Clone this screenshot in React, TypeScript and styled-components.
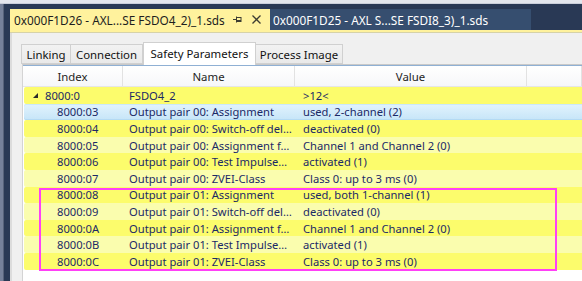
import React from "react";
import styled, { createGlobalStyle, css } from "styled-components";

const GlobalStyle = createGlobalStyle`
  html, body { margin: 0; padding: 0; background: #ffffff; overflow: hidden; }
  * { box-sizing: border-box; }
`;

const FONT = `"Noto Sans", "Open Sans", Arial, sans-serif`;

const Frame = styled.div`
  position: relative;
  width: 582px;
  height: 281px;
  overflow: hidden;
  display: flex;
  flex-direction: column;
  font-family: ${FONT};
  font-size: 11.2px;
`;

const TopStrip = styled.div`
  height: 4px;
  flex: none;
  background: #e3e6ed;
  border-bottom: 1px solid #c9ceda;
`;

const Body = styled.div`
  flex: 1;
  display: flex;
  min-height: 0;
`;

const LeftEdge = styled.div`
  width: 4px;
  flex: none;
  background: #75819a;
  border-right: 1px solid #56627a;
`;

const DocWell = styled.div`
  flex: 1;
  min-width: 0;
  display: flex;
  flex-direction: column;
  background: #293955;
  padding: 5px 0 0 6px;
`;

const TabStrip = styled.div`
  display: flex;
  height: 21px;
  flex: none;
`;

const DocTab = styled.div<{ $active?: boolean }>`
  display: flex;
  align-items: center;
  padding: 0 0 0 4px;
  white-space: nowrap;
  ${(p) =>
    p.$active
      ? css`
          width: 260px;
          background: #fff29d;
          color: #1e1e1e;
        `
      : css`
          width: 261px;
          background: #364e6f;
          color: #ffffff;
          padding-left: 3px;
        `}
`;

const TabTitle = styled.span`
  flex: 1;
  font-size: 11.8px;
`;

const TabIcons = styled.span`
  display: flex;
  align-items: center;
  gap: 10px;
  margin-right: 9px;
`;

const AccentLine = styled.div`
  height: 3px;
  flex: none;
  background: #fff29d;
  border-bottom: 1px solid #d6d2a8;
`;

const Panel = styled.div`
  flex: 1;
  display: flex;
  flex-direction: column;
  background: #f0f0f0;
  border-left: 2px solid #dcdcdc;
  padding: 8px 0 0 9px;
  min-height: 0;
`;

const InnerTabs = styled.div`
  display: flex;
  align-items: flex-end;
  height: 23px;
  flex: none;
  position: relative;
  z-index: 1;
`;

const InnerTab = styled.div<{ $active?: boolean; $w: number }>`
  width: ${(p) => p.$w}px;
  display: flex;
  align-items: center;
  justify-content: center;
  border: 1px solid #d0d0d0;
  color: #111;
  font-size: 11.4px;
  ${(p) =>
    p.$active
      ? css`
          height: 23px;
          background: #ffffff;
          border-bottom: none;
          margin-bottom: -1px;
          padding-bottom: 2px;
        `
      : css`
          height: 20px;
          background: linear-gradient(#f2f2f2, #e9e9e9);
          margin-left: -1px;
          &:first-child { margin-left: 0; }
        `}
`;

const ListBox = styled.div`
  flex: 1;
  display: flex;
  flex-direction: column;
  background: #ffffff;
  border-top: 1px solid #c9c9c9;
  border-left: 1px solid #d4d4d4;
  margin-left: 1px;
  min-height: 0;
`;

const ListInner = styled.div`
  flex: 1;
  border-top: 1px solid #8fb0d4;
  background: #ffffff;
`;

const HeaderRow = styled.div`
  display: grid;
  grid-template-columns: 100px 172px 232px 1fr;
  height: 21px;
  background: linear-gradient(#ffffff, #f6f7f9);
  border-bottom: 1px solid #e6e6e6;
`;

const HeaderCell = styled.div`
  display: flex;
  align-items: center;
  justify-content: center;
  color: #1e1e1e;
  border-right: 1px solid #e2e2e2;
  font-size: 11.4px;
`;

const rowTones = {
  bright: css`
    background: #fcfc6c;
  `,
  pale: css`
    background: #fafdae;
  `,
  selected: css`
    background: linear-gradient(#e2f3fd, #c6e5f8);
    box-shadow: inset 0 1px 0 #cbe8fa, inset 0 -1px 0 #b4daf3;
  `,
};

type Tone = keyof typeof rowTones;

const Row = styled.div<{ $tone: Tone }>`
  display: grid;
  grid-template-columns: 99px 172px 232px 1fr;
  height: 16.6px;
  margin-left: 1px;
  border-radius: 2px 0 0 2px;
  color: #1b2966;
  align-items: center;
  white-space: nowrap;
  ${(p) => rowTones[p.$tone]}
`;

const IndexCell = styled.div<{ $parent?: boolean }>`
  display: flex;
  align-items: center;
  padding-left: ${(p) => (p.$parent ? 9 : 33)}px;
  gap: 7px;
`;

const NameCell = styled.div`
  padding-left: 6px;
  overflow: hidden;
`;

const ValueCell = styled.div`
  padding-left: 8px;
  overflow: hidden;
`;

const Highlight = styled.div`
  position: absolute;
  left: 39px;
  top: 188px;
  width: 518px;
  height: 83px;
  border: 2px solid #ff40f6;
  pointer-events: none;
`;

const PinIcon = () => (
  <svg width="9" height="7" viewBox="0 0 9 7">
    <path d="M0 3.5H3" stroke="#3c3c32" strokeWidth="1" fill="none" />
    <path d="M3.5 0.5V6.5" stroke="#3c3c32" strokeWidth="1" fill="none" />
    <rect x="3.5" y="1.5" width="4.5" height="4" stroke="#3c3c32" strokeWidth="1" fill="none" />
    <path d="M3.5 4.5H8" stroke="#3c3c32" strokeWidth="1" fill="none" />
  </svg>
);

const CloseIcon = () => (
  <svg width="9" height="9" viewBox="0 0 9 9">
    <path d="M0.5 0.5L8.5 8.5M8.5 0.5L0.5 8.5" stroke="#3c3c32" strokeWidth="1.3" fill="none" />
  </svg>
);

const ExpandIcon = () => (
  <svg width="5" height="5" viewBox="0 0 5 5">
    <path d="M5 0V5H0Z" fill="#2a2a2a" />
  </svg>
);

const rows: { idx: string; name: string; value: string; tone: Tone; parent?: boolean }[] = [
  { idx: "8000:0", name: "FSDO4_2", value: ">12<", tone: "bright", parent: true },
  { idx: "8000:03", name: "Output pair 00: Assignment", value: "used, 2-channel (2)", tone: "selected" },
  { idx: "8000:04", name: "Output pair 00: Switch-off del…", value: "deactivated (0)", tone: "bright" },
  { idx: "8000:05", name: "Output pair 00: Assignment f…", value: "Channel 1 and Channel 2 (0)", tone: "pale" },
  { idx: "8000:06", name: "Output pair 00: Test Impulse…", value: "activated (1)", tone: "bright" },
  { idx: "8000:07", name: "Output pair 00: ZVEI-Class", value: "Class 0: up to 3 ms (0)", tone: "pale" },
  { idx: "8000:08", name: "Output pair 01: Assignment", value: "used, both 1-channel (1)", tone: "bright" },
  { idx: "8000:09", name: "Output pair 01: Switch-off del…", value: "deactivated (0)", tone: "pale" },
  { idx: "8000:0A", name: "Output pair 01: Assignment f…", value: "Channel 1 and Channel 2 (0)", tone: "bright" },
  { idx: "8000:0B", name: "Output pair 01: Test Impulse…", value: "activated (1)", tone: "pale" },
  { idx: "8000:0C", name: "Output pair 01: ZVEI-Class", value: "Class 0: up to 3 ms (0)", tone: "bright" },
];

export default function App() {
  return (
    <>
      <GlobalStyle />
      <Frame>
        <TopStrip />
        <Body>
          <LeftEdge />
          <DocWell>
            <TabStrip>
              <DocTab $active>
                <TabTitle>0x000F1D26 - AXL...SE FSDO4_2)_1.sds</TabTitle>
                <TabIcons>
                  <PinIcon />
                  <CloseIcon />
                </TabIcons>
              </DocTab>
              <DocTab>
                <TabTitle>0x000F1D25 - AXL S...SE FSDI8_3)_1.sds</TabTitle>
              </DocTab>
            </TabStrip>
            <AccentLine />
            <Panel>
              <InnerTabs>
                <InnerTab $w={50}>Linking</InnerTab>
                <InnerTab $w={73}>Connection</InnerTab>
                <InnerTab $w={113} $active>Safety Parameters</InnerTab>
                <InnerTab $w={88}>Process Image</InnerTab>
              </InnerTabs>
              <ListBox>
                <ListInner>
                  <HeaderRow>
                    <HeaderCell>Index</HeaderCell>
                    <HeaderCell>Name</HeaderCell>
                    <HeaderCell>Value</HeaderCell>
                    <HeaderCell />
                  </HeaderRow>
                  {rows.map((r) => (
                    <Row key={r.idx} $tone={r.tone}>
                      <IndexCell $parent={r.parent}>
                        {r.parent && <ExpandIcon />}
                        {r.idx}
                      </IndexCell>
                      <NameCell>{r.name}</NameCell>
                      <ValueCell>{r.value}</ValueCell>
                      <div />
                    </Row>
                  ))}
                </ListInner>
              </ListBox>
            </Panel>
          </DocWell>
        </Body>
        <Highlight />
      </Frame>
    </>
  );
}
